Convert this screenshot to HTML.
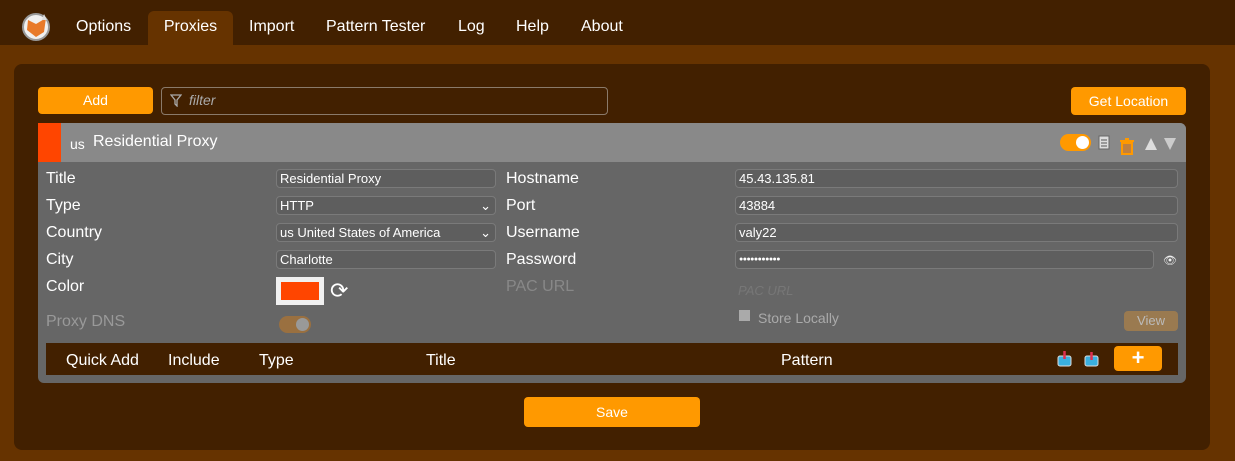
<!DOCTYPE html>
<html><head><style>
*{box-sizing:border-box;margin:0;padding:0}
body{width:1235px;height:461px;background:#663300;font-family:"Liberation Sans",Arial,sans-serif;color:#fff;position:relative;overflow:hidden}
.abs{position:absolute}
.nav{left:0;top:0;width:1235px;height:45px;background:#422000}
.tab{position:absolute;top:11px;height:34px;line-height:32px;font-size:16px;color:#fff}
.panel{left:14px;top:64px;width:1196px;height:386px;background:#422000;border-radius:8px}
.btn{background:#ff9900;border-radius:4px;color:#fff;font-size:14px;text-align:center}
.card{left:38px;top:123px;width:1148px;height:260px;background:#666;border-radius:0 6px 6px 6px;overflow:hidden}
.lbl{position:absolute;font-size:16px;color:#fff}
.inp{position:absolute;height:19px;background:#5e5e5e;border:1px solid #7a7a7a;border-radius:4px;font-size:13px;color:#fff;padding-left:3px;line-height:17px}
.th{position:absolute;font-size:16px;top:9px}
</style></head><body>
<div class="abs nav"></div>
<svg class="abs" style="left:19px;top:10px" width="34" height="32" viewBox="0 0 34 32"><circle cx="17" cy="17" r="13" fill="#f0f0f0" stroke="#999" stroke-width="2"/><path d="M9 10 L17 14 L27 8 L25 22 L17 27 L8 20 Z" fill="#e87a2a"/><path d="M25 4 L28 10 L23 10Z" fill="#ddd"/></svg>
<div class="tab" style="left:76px">Options</div>
<div class="tab" style="left:148px;width:85px;background:#663300;border-radius:6px 6px 0 0;text-align:center">Proxies</div>
<div class="tab" style="left:249px">Import</div>
<div class="tab" style="left:326px">Pattern Tester</div>
<div class="tab" style="left:458px">Log</div>
<div class="tab" style="left:516px">Help</div>
<div class="tab" style="left:581px">About</div>
<div class="abs panel"></div>
<div class="abs btn" style="left:38px;top:87px;width:115px;height:27px;line-height:27px">Add</div>
<div class="abs" style="left:161px;top:87px;width:447px;height:28px;border:1px solid #8a7a6a;border-radius:4px"></div>
<svg class="abs" style="left:170px;top:94px" width="12" height="13" viewBox="0 0 12 13"><path d="M1 1 H11 L7 6 V12 L5 10 V6 Z" fill="none" stroke="#aaa" stroke-width="1.3"/></svg>
<div class="abs" style="left:189px;top:92px;font-size:14px;font-style:italic;color:#aaa">filter</div>
<div class="abs btn" style="left:1071px;top:87px;width:115px;height:28px;line-height:28px">Get Location</div>
<div class="abs card">
 <div class="abs" style="left:0;top:0;width:1148px;height:39px;background:#898989"></div>
 <div class="abs" style="left:0;top:0;width:23px;height:39px;background:#ff4500"></div>
 <div class="abs" style="left:32px;top:13px;font-size:14px">us</div>
 <div class="abs" style="left:55px;top:10px;font-size:16px">Residential Proxy</div>
 <div class="abs" style="left:1022px;top:11px;width:31px;height:17px;background:#ff9900;border-radius:9px"><div style="position:absolute;right:2px;top:2px;width:13px;height:13px;border-radius:50%;background:#fff"></div></div>
 <svg class="abs" style="left:1060px;top:12px" width="13" height="16"><rect x="1" y="1" width="10" height="13" fill="#ddd" stroke="#666"/><path d="M3 5h6M3 8h6M3 11h6" stroke="#555"/></svg>
 <svg class="abs" style="left:1082px;top:15px" width="14" height="17"><rect x="0" y="2" width="14" height="2" fill="#ff9900"/><rect x="5" y="0" width="4" height="2" fill="#ff9900"/><rect x="2" y="5" width="10" height="11" fill="#c08040" stroke="#ff9900" stroke-width="2"/></svg>
 <svg class="abs" style="left:1106px;top:14px" width="34" height="14"><path d="M1 13 L7 1 L13 13Z" fill="#ddd"/><path d="M20 1 H32 L26 13Z" fill="#ccc"/></svg>
 <div class="lbl" style="left:8px;top:47px">Title</div>
 <div class="lbl" style="left:8px;top:74px">Type</div>
 <div class="lbl" style="left:8px;top:101px">Country</div>
 <div class="lbl" style="left:8px;top:128px">City</div>
 <div class="lbl" style="left:8px;top:155px">Color</div>
 <div class="lbl" style="left:8px;top:190px;color:#999">Proxy DNS</div>
 <div class="inp" style="left:238px;top:46px;width:220px">Residential Proxy</div>
 <div class="inp" style="left:238px;top:73px;width:220px">HTTP<span style="position:absolute;right:4px">⌄</span></div>
 <div class="inp" style="left:238px;top:100px;width:220px">us United States of America<span style="position:absolute;right:4px">⌄</span></div>
 <div class="inp" style="left:238px;top:127px;width:220px">Charlotte</div>
 <div class="abs" style="left:238px;top:154px;width:48px;height:28px;background:#f0f0f0;padding:5px"><div style="width:100%;height:100%;background:#ff4500"></div></div>
 <div class="abs" style="left:292px;top:155px;font-size:22px">⟳</div>
 <div class="abs" style="left:241px;top:193px;width:32px;height:17px;border-radius:9px;background:#9a7040"><div style="position:absolute;right:2px;top:2px;width:13px;height:13px;border-radius:50%;background:#999"></div></div>
 <div class="lbl" style="left:468px;top:47px">Hostname</div>
 <div class="lbl" style="left:468px;top:74px">Port</div>
 <div class="lbl" style="left:468px;top:101px">Username</div>
 <div class="lbl" style="left:468px;top:128px">Password</div>
 <div class="lbl" style="left:468px;top:155px;color:#888">PAC URL</div>
 <div class="inp" style="left:697px;top:46px;width:443px">45.43.135.81</div>
 <div class="inp" style="left:697px;top:73px;width:443px">43884</div>
 <div class="inp" style="left:697px;top:100px;width:443px">valy22</div>
 <div class="inp" style="left:697px;top:127px;width:419px;font-size:7px;letter-spacing:-0.5px">●●●●●●●●●●●</div>
 <div class="abs" style="left:1125px;top:131px;font-size:11px;color:#eee">👁</div>
 <div class="abs" style="left:700px;top:160px;font-size:13px;font-style:italic;color:#777">PAC URL</div>
 <div class="abs" style="left:701px;top:187px;width:11px;height:11px;background:#aaa"></div>
 <div class="abs" style="left:720px;top:187px;font-size:14px;color:#aaa">Store Locally</div>
 <div class="abs" style="left:1086px;top:188px;width:54px;height:20px;background:#9a7a50;border-radius:4px;color:#bbb;font-size:13px;text-align:center;line-height:20px">View</div>
 <div class="abs" style="left:8px;top:220px;width:1132px;height:32px;background:#422000">
  <div class="th" style="left:20px">Quick Add</div>
  <div class="th" style="left:122px">Include</div>
  <div class="th" style="left:213px">Type</div>
  <div class="th" style="left:380px">Title</div>
  <div class="th" style="left:735px">Pattern</div>
  <svg class="abs" style="left:1011px;top:8px" width="44" height="16"><rect x="1" y="5" width="13" height="10" rx="2" fill="#3ab0e0" stroke="#ddd"/><path d="M7.5 0v8" stroke="#e03050" stroke-width="2.5"/><rect x="28" y="5" width="13" height="10" rx="2" fill="#3ab0e0" stroke="#ddd"/><path d="M34.5 9v-8" stroke="#e03050" stroke-width="2.5"/></svg>
  <div class="abs btn" style="left:1068px;top:3px;width:48px;height:25px;font-size:22px;line-height:24px;font-weight:bold">+</div>
 </div>
</div>
<div class="abs btn" style="left:524px;top:397px;width:176px;height:30px;line-height:30px">Save</div>
</body></html>
